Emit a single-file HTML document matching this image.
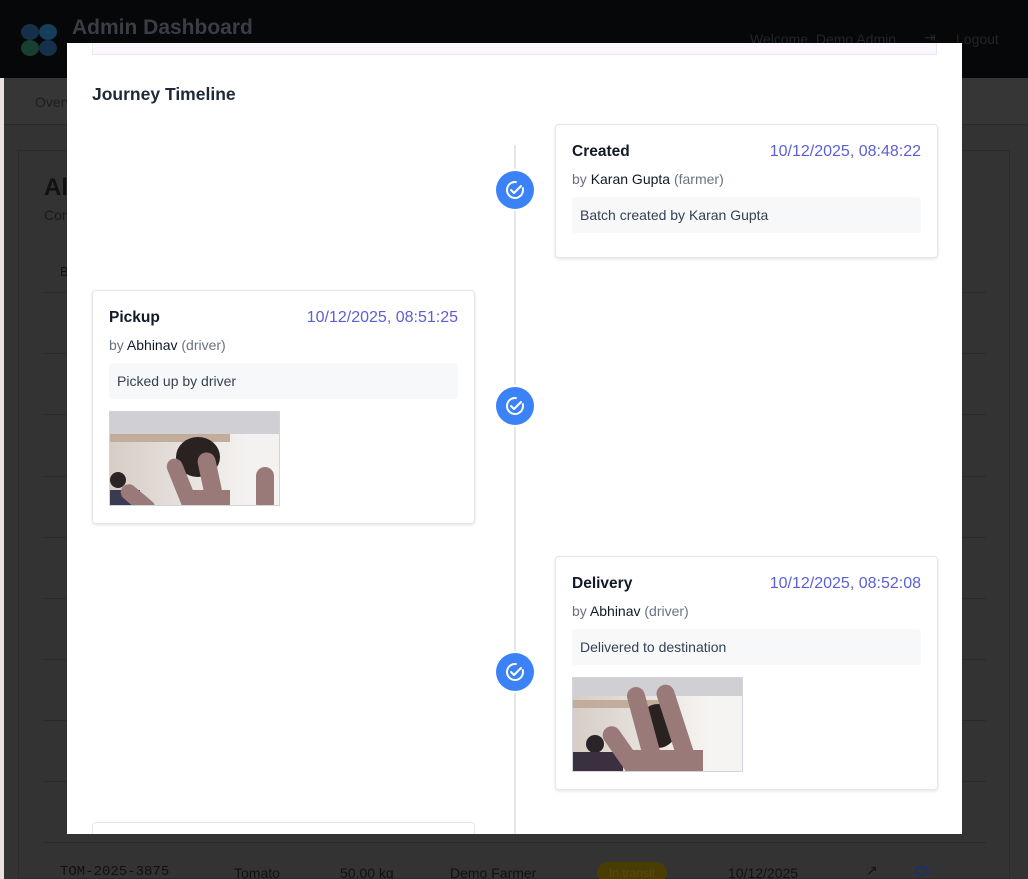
<!DOCTYPE html>
<html><head><meta charset="utf-8"><style>
*{box-sizing:border-box;margin:0;padding:0}
html,body{width:1028px;height:879px;overflow:hidden}
body{background:#333;font-family:"Liberation Sans",sans-serif;position:relative}
.abs{position:absolute}
.card{position:absolute;background:#fff;border:1px solid #e5e7eb;border-radius:4px;box-shadow:0 1px 3px rgba(0,0,0,.12)}
.t{position:absolute;left:16px;top:18px;font-size:15.5px;font-weight:bold;color:#111827}
.d{position:absolute;right:16px;top:18px;font-size:16px;color:#5b5fd6}
.by{position:absolute;left:16px;top:46px;font-size:14px;color:#6b7280}
.by b{font-weight:normal;color:#111827}
.note{position:absolute;left:16px;right:16px;top:72px;height:36px;background:#f7f8fa;border-radius:3px;font-size:14px;color:#374151;padding:10px 8px}
.ph{position:absolute;left:16px;top:120px;width:171px;height:95px;border:1px solid #d1d5db;overflow:hidden}
.dot{position:absolute;left:496px;width:38px;height:38px;border-radius:50%;background:#3b82f6;box-shadow:0 0 0 2px #fff}
.row{position:absolute;left:43px;width:943px;height:1px;background:#2a2a2a}
</style></head><body>
<div class="abs" style="left:0;top:78px;width:4px;height:801px;background:#e8e2e0"></div>
<div class="abs" style="left:0;top:0;width:1028px;height:78px;background:#060709"></div>
<div class="abs" style="left:20px;top:22px;width:38px;height:36px">
<svg width="38" height="36"><ellipse cx="10" cy="10" rx="9" ry="8" fill="#14304a"/><ellipse cx="28" cy="10" rx="9" ry="8" fill="#163f5a"/><ellipse cx="10" cy="26" rx="9" ry="8" fill="#174030"/><ellipse cx="28" cy="26" rx="9" ry="8" fill="#14304a"/></svg></div>
<div class="abs" style="left:72px;top:16px;font-size:21px;font-weight:bold;color:#3a3d44">Admin Dashboard</div>
<div class="abs" style="left:750px;top:31px;font-size:14px;color:#222428">Welcome, Demo Admin</div>
<div class="abs" style="left:924px;top:29px;font-size:14px;color:#222428">⇥</div>
<div class="abs" style="left:956px;top:31px;font-size:14px;color:#222428">Logout</div>
<div class="abs" style="left:4px;top:78px;width:1024px;height:47px;background:#363636;border-bottom:1px solid #2a2a2a"></div>
<div class="abs" style="left:35px;top:94px;font-size:14px;color:#1e1e1e">Overview</div>
<div class="abs" style="left:18px;top:150px;width:992px;height:729px;background:#333;border:1px solid #2b2b2b"></div>
<div class="abs" style="left:44px;top:174px;font-size:24px;font-weight:bold;color:#111">All</div>
<div class="abs" style="left:44px;top:207px;font-size:14px;color:#1a1a1a">Con</div>
<div class="abs" style="left:60px;top:264px;font-size:13px;color:#111">B</div>
<div class="row" style="top:292px"></div><div class="row" style="top:353px"></div><div class="row" style="top:414px"></div><div class="row" style="top:476px"></div><div class="row" style="top:537px"></div><div class="row" style="top:598px"></div><div class="row" style="top:659px"></div><div class="row" style="top:720px"></div><div class="row" style="top:781px"></div><div class="row" style="top:842px"></div>
<div class="abs" style="left:60px;top:864px;font-family:'Liberation Mono',monospace;font-size:14px;color:#111">TOM-2025-3875</div>
<div class="abs" style="left:234px;top:865px;font-size:14px;color:#111">Tomato</div>
<div class="abs" style="left:340px;top:865px;font-size:14px;color:#111">50.00 kg</div>
<div class="abs" style="left:450px;top:865px;font-size:14px;color:#111">Demo Farmer</div>
<div class="abs" style="left:597px;top:862px;width:70px;height:22px;border-radius:11px;background:#4a3c05;font-size:12px;color:#5a4a10;text-align:center;padding-top:4px">In transit</div>
<div class="abs" style="left:728px;top:865px;font-size:14px;color:#111">10/12/2025</div>
<div class="abs" style="left:866px;top:862px;font-size:14px;color:#111">↗</div>
<div class="abs" style="left:915px;top:866px;width:14px;height:10px;border:2px solid #1e2f6a;border-radius:50%"></div>

<div class="abs" style="left:67px;top:43px;width:895px;height:791px;background:#fff;overflow:hidden">
<div class="abs" style="left:25px;top:0;width:845px;height:12px;background:#faf5fe;border:1px solid #ebe6f0;border-top:none"></div>
<div class="abs" style="left:25px;top:41px;font-size:17.5px;font-weight:bold;color:#1f2937">Journey Timeline</div>
<div class="abs" style="left:447px;top:102px;width:2px;height:700px;background:#e5e7eb"></div>
</div>

<div class="dot" style="top:171px"><svg width="38" height="38" viewBox="0 0 38 38"><circle cx="19" cy="19" r="8" fill="none" stroke="#fff" stroke-width="2" stroke-dasharray="42 8" transform="rotate(-20 19 19)"/><path d="M15 19l3 3 7-7" fill="none" stroke="#fff" stroke-width="2" stroke-linecap="round" stroke-linejoin="round"/></svg></div>
<div class="dot" style="top:387px"><svg width="38" height="38" viewBox="0 0 38 38"><circle cx="19" cy="19" r="8" fill="none" stroke="#fff" stroke-width="2" stroke-dasharray="42 8" transform="rotate(-20 19 19)"/><path d="M15 19l3 3 7-7" fill="none" stroke="#fff" stroke-width="2" stroke-linecap="round" stroke-linejoin="round"/></svg></div>
<div class="dot" style="top:653px"><svg width="38" height="38" viewBox="0 0 38 38"><circle cx="19" cy="19" r="8" fill="none" stroke="#fff" stroke-width="2" stroke-dasharray="42 8" transform="rotate(-20 19 19)"/><path d="M15 19l3 3 7-7" fill="none" stroke="#fff" stroke-width="2" stroke-linecap="round" stroke-linejoin="round"/></svg></div>

<div class="card" style="left:555px;top:124px;width:383px;height:134px">
<div class="t">Created</div><div class="d">10/12/2025, 08:48:22</div>
<div class="by">by <b>Karan Gupta</b> (farmer)</div>
<div class="note">Batch created by Karan Gupta</div></div>

<div class="card" style="left:92px;top:290px;width:383px;height:234px">
<div class="t">Pickup</div><div class="d">10/12/2025, 08:51:25</div>
<div class="by">by <b>Abhinav</b> (driver)</div>
<div class="note">Picked up by driver</div>
<div class="ph"><svg width="171" height="95"><defs><linearGradient id="g1" x1="0" x2="1"><stop offset="0" stop-color="#d6cdc6"/><stop offset=".8" stop-color="#f4f2f0"/></linearGradient></defs><rect width="171" height="95" fill="url(#g1)"/><rect width="171" height="22" fill="#cfcfd4"/><rect y="22" width="120" height="8" fill="#c2ad9c"/><ellipse cx="88" cy="45" rx="22" ry="20" fill="#2a2220"/><circle cx="8" cy="68" r="8" fill="#2a2428"/><rect x="0" y="78" width="30" height="17" fill="#3a3a50"/><g fill="#9a7a78"><rect x="65" y="45" width="16" height="60" rx="8" transform="rotate(-22 73 75)"/><rect x="92" y="40" width="18" height="60" rx="9" transform="rotate(-12 101 70)"/><rect x="20" y="68" width="16" height="40" rx="8" transform="rotate(-50 28 88)"/><rect x="146" y="55" width="18" height="45" rx="9"/><rect x="75" y="78" width="45" height="20"/></g></svg></div></div>

<div class="card" style="left:555px;top:556px;width:383px;height:234px">
<div class="t">Delivery</div><div class="d">10/12/2025, 08:52:08</div>
<div class="by">by <b>Abhinav</b> (driver)</div>
<div class="note">Delivered to destination</div>
<div class="ph"><svg width="171" height="95"><defs><linearGradient id="g2" x1="0" x2="1"><stop offset="0" stop-color="#d6cdc6"/><stop offset=".8" stop-color="#f6f4f2"/></linearGradient></defs><rect width="171" height="95" fill="url(#g2)"/><rect width="171" height="18" fill="#cfcfd4"/><rect y="22" width="90" height="8" fill="#c2ad9c"/><ellipse cx="85" cy="48" rx="20" ry="22" fill="#2a2220"/><circle cx="22" cy="66" r="9" fill="#2a2428"/><rect x="0" y="74" width="50" height="21" fill="#3a3040"/><g fill="#9a7a78"><rect x="62" y="8" width="18" height="80" rx="9" transform="rotate(-15 71 48)"/><rect x="94" y="5" width="18" height="85" rx="9" transform="rotate(-18 103 48)"/><rect x="40" y="45" width="18" height="55" rx="9" transform="rotate(-35 49 72)"/><rect x="60" y="72" width="70" height="23"/></g></svg></div></div>

<div class="abs" style="left:92px;top:822px;width:383px;height:12px;background:#fff;border:1px solid #e5e7eb;border-bottom:none;border-radius:4px 4px 0 0"></div>
</body></html>
